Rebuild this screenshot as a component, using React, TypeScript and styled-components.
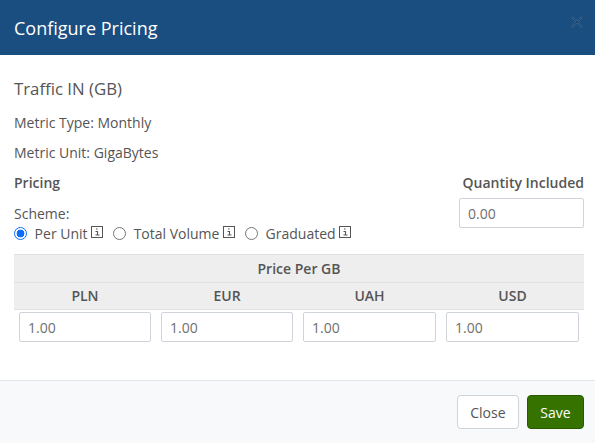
import styled, { createGlobalStyle } from 'styled-components';

const GlobalStyle = createGlobalStyle`
  html, body {
    margin: 0;
    padding: 0;
    background: #fff;
  }
  body {
    font-family: "Open Sans", "Liberation Sans", sans-serif;
    font-size: 14px;
    color: #555;
  }
`

const Modal = styled.div`
  width: 595px;
  height: 443px;
  display: flex;
  flex-direction: column;
  overflow: hidden;
`

const Header = styled.div`
  height: 55px;
  flex-shrink: 0;
  background: #1a4d80;
  padding: 0 14px;
  display: flex;
  align-items: center;
  justify-content: space-between;
  box-sizing: border-box;
`

const Title = styled.h4`
  margin: 0;
  font-size: 18px;
  font-weight: 400;
  color: #fff;
`

const CloseX = styled.button`
  background: transparent;
  border: none;
  padding: 0;
  margin: 16px -2px 0 0;
  align-self: flex-start;
  width: 12px;
  height: 12px;
  display: flex;
  cursor: pointer;
`

const Body = styled.div`
  flex: 1;
  padding: 23px 11px 0 14px;
`

const Name = styled.div`
  font-size: 16.8px;
  line-height: 22px;
  margin-bottom: 13px;
`

const Line = styled.div`
  line-height: 20px;
  margin-bottom: 10px;
`

const PricingRow = styled.div`
  display: flex;
  justify-content: space-between;
  height: 81px;
`

const Label = styled.div`
  font-weight: 600;
  line-height: 20px;
`

const Scheme = styled.div`
  line-height: 20px;
  margin-top: 11px;
`

const Radios = styled.div`
  display: flex;
  align-items: center;
  height: 20px;
  margin-top: -1px;
`

const RadioLabel = styled.label`
  display: flex;
  align-items: center;
  margin-right: 10px;
`

const Radio = styled.input`
  appearance: none;
  box-sizing: border-box;
  width: 13px;
  height: 13px;
  margin: 0 7.6px 0 0;
  border-radius: 50%;
  border: 1px solid #767676;
  background: #fff;

  &:checked {
    border: 1.5px solid #0d6efd;
    background: radial-gradient(circle, #0d6efd 0 3.6px, #fff 4.2px);
  }
`

const Info = styled.svg`
  width: 12px;
  height: 12px;
  margin-left: 3.5px;
  margin-top: -3px;
`

const QuantityCol = styled.div`
  width: 125px;
  display: flex;
  flex-direction: column;
  align-items: flex-end;
  gap: 5px;
`

const TextInput = styled.input`
  width: 100%;
  height: 30px;
  box-sizing: border-box;
  border: 1px solid #ced4da;
  border-radius: 2px;
  padding: 0 8px;
  font-family: inherit;
  font-size: 14px;
  color: #6f6f6f;
  background: #fff;
  outline: none;
`

const Table = styled.div`
  width: 570px;
`

const TitleRow = styled.div`
  background: #eee;
  border-top: 1px solid #dee2e6;
  height: 27px;
  text-align: center;
  font-weight: 600;
  line-height: 27px;
`

const Columns = styled.div`
  display: grid;
  grid-template-columns: 142px 142px 143px 143px;
`

const HeadRow = styled(Columns)`
  background: #eee;
  border-top: 1px solid #dee2e6;
  height: 26px;
  text-align: center;
  font-weight: 600;
  line-height: 26px;
`

const Cells = styled(Columns)`
  border-top: 1px solid #dee2e6;
  padding-top: 2px;
`

const Cell = styled.div`
  padding: 0 5px;
`

const Footer = styled.div`
  height: 63px;
  flex-shrink: 0;
  box-sizing: border-box;
  background: #f8f9fb;
  border-top: 1px solid #e3e6ea;
  padding: 0 11px 0 0;
  display: flex;
  align-items: center;
  justify-content: flex-end;
  gap: 8px;
`

const Btn = styled.button<{ $primary?: boolean }>`
  height: 34px;
  padding: 0 12.4px;
  border-radius: 4px;
  font-family: inherit;
  font-size: 14px;
  font-weight: ${p => (p.$primary ? 500 : 400)};
  cursor: pointer;
  background: ${p => (p.$primary ? '#367200' : '#fff')};
  border: 1px solid ${p => (p.$primary ? '#2a5a00' : '#ced4da')};
  color: ${p => (p.$primary ? '#fff' : '#555')};
`

function InfoIcon() {
  return (
    <Info viewBox="0 0 12 12" fill="none" stroke="#555">
      <rect x="0.5" y="0.5" width="11" height="11" />
      <path d="M5 3h1.5M4.5 5.5h2v3.5M4.5 9h4" strokeWidth="1.1" />
    </Info>
  )
}

const currencies = ['PLN', 'EUR', 'UAH', 'USD']

export default function App() {
  return (
    <>
      <GlobalStyle />
      <Modal>
        <Header>
          <Title>Configure Pricing</Title>
          <CloseX title="Close">
            <svg width="12" height="12" viewBox="0 0 12 12" fill="none">
              <path d="M1 1l10 10M11 1L1 11" stroke="#3b6590" strokeWidth="2" />
              <path d="M1.5 1.5l9 9M10.5 1.5l-9 9" stroke="#1c4268" strokeWidth="1" />
            </svg>
          </CloseX>
        </Header>
        <Body>
          <Name>Traffic IN (GB)</Name>
          <Line>Metric Type: Monthly</Line>
          <Line>Metric Unit: GigaBytes</Line>
          <PricingRow>
            <div>
              <Label>Pricing</Label>
              <Scheme>Scheme:</Scheme>
              <Radios>
                <RadioLabel>
                  <Radio type="radio" name="scheme" defaultChecked />
                  Per Unit<InfoIcon />
                </RadioLabel>
                <RadioLabel>
                  <Radio type="radio" name="scheme" />
                  Total Volume<InfoIcon />
                </RadioLabel>
                <RadioLabel>
                  <Radio type="radio" name="scheme" />
                  Graduated<InfoIcon />
                </RadioLabel>
              </Radios>
            </div>
            <QuantityCol>
              <Label>Quantity Included</Label>
              <TextInput defaultValue="0.00" />
            </QuantityCol>
          </PricingRow>
          <Table>
            <TitleRow>Price Per GB</TitleRow>
            <HeadRow>
              {currencies.map(c => <div key={c}>{c}</div>)}
            </HeadRow>
            <Cells>
              {currencies.map(c => (
                <Cell key={c}>
                  <TextInput defaultValue="1.00" />
                </Cell>
              ))}
            </Cells>
          </Table>
        </Body>
        <Footer>
          <Btn>Close</Btn>
          <Btn $primary>Save</Btn>
        </Footer>
      </Modal>
    </>
  );
}
